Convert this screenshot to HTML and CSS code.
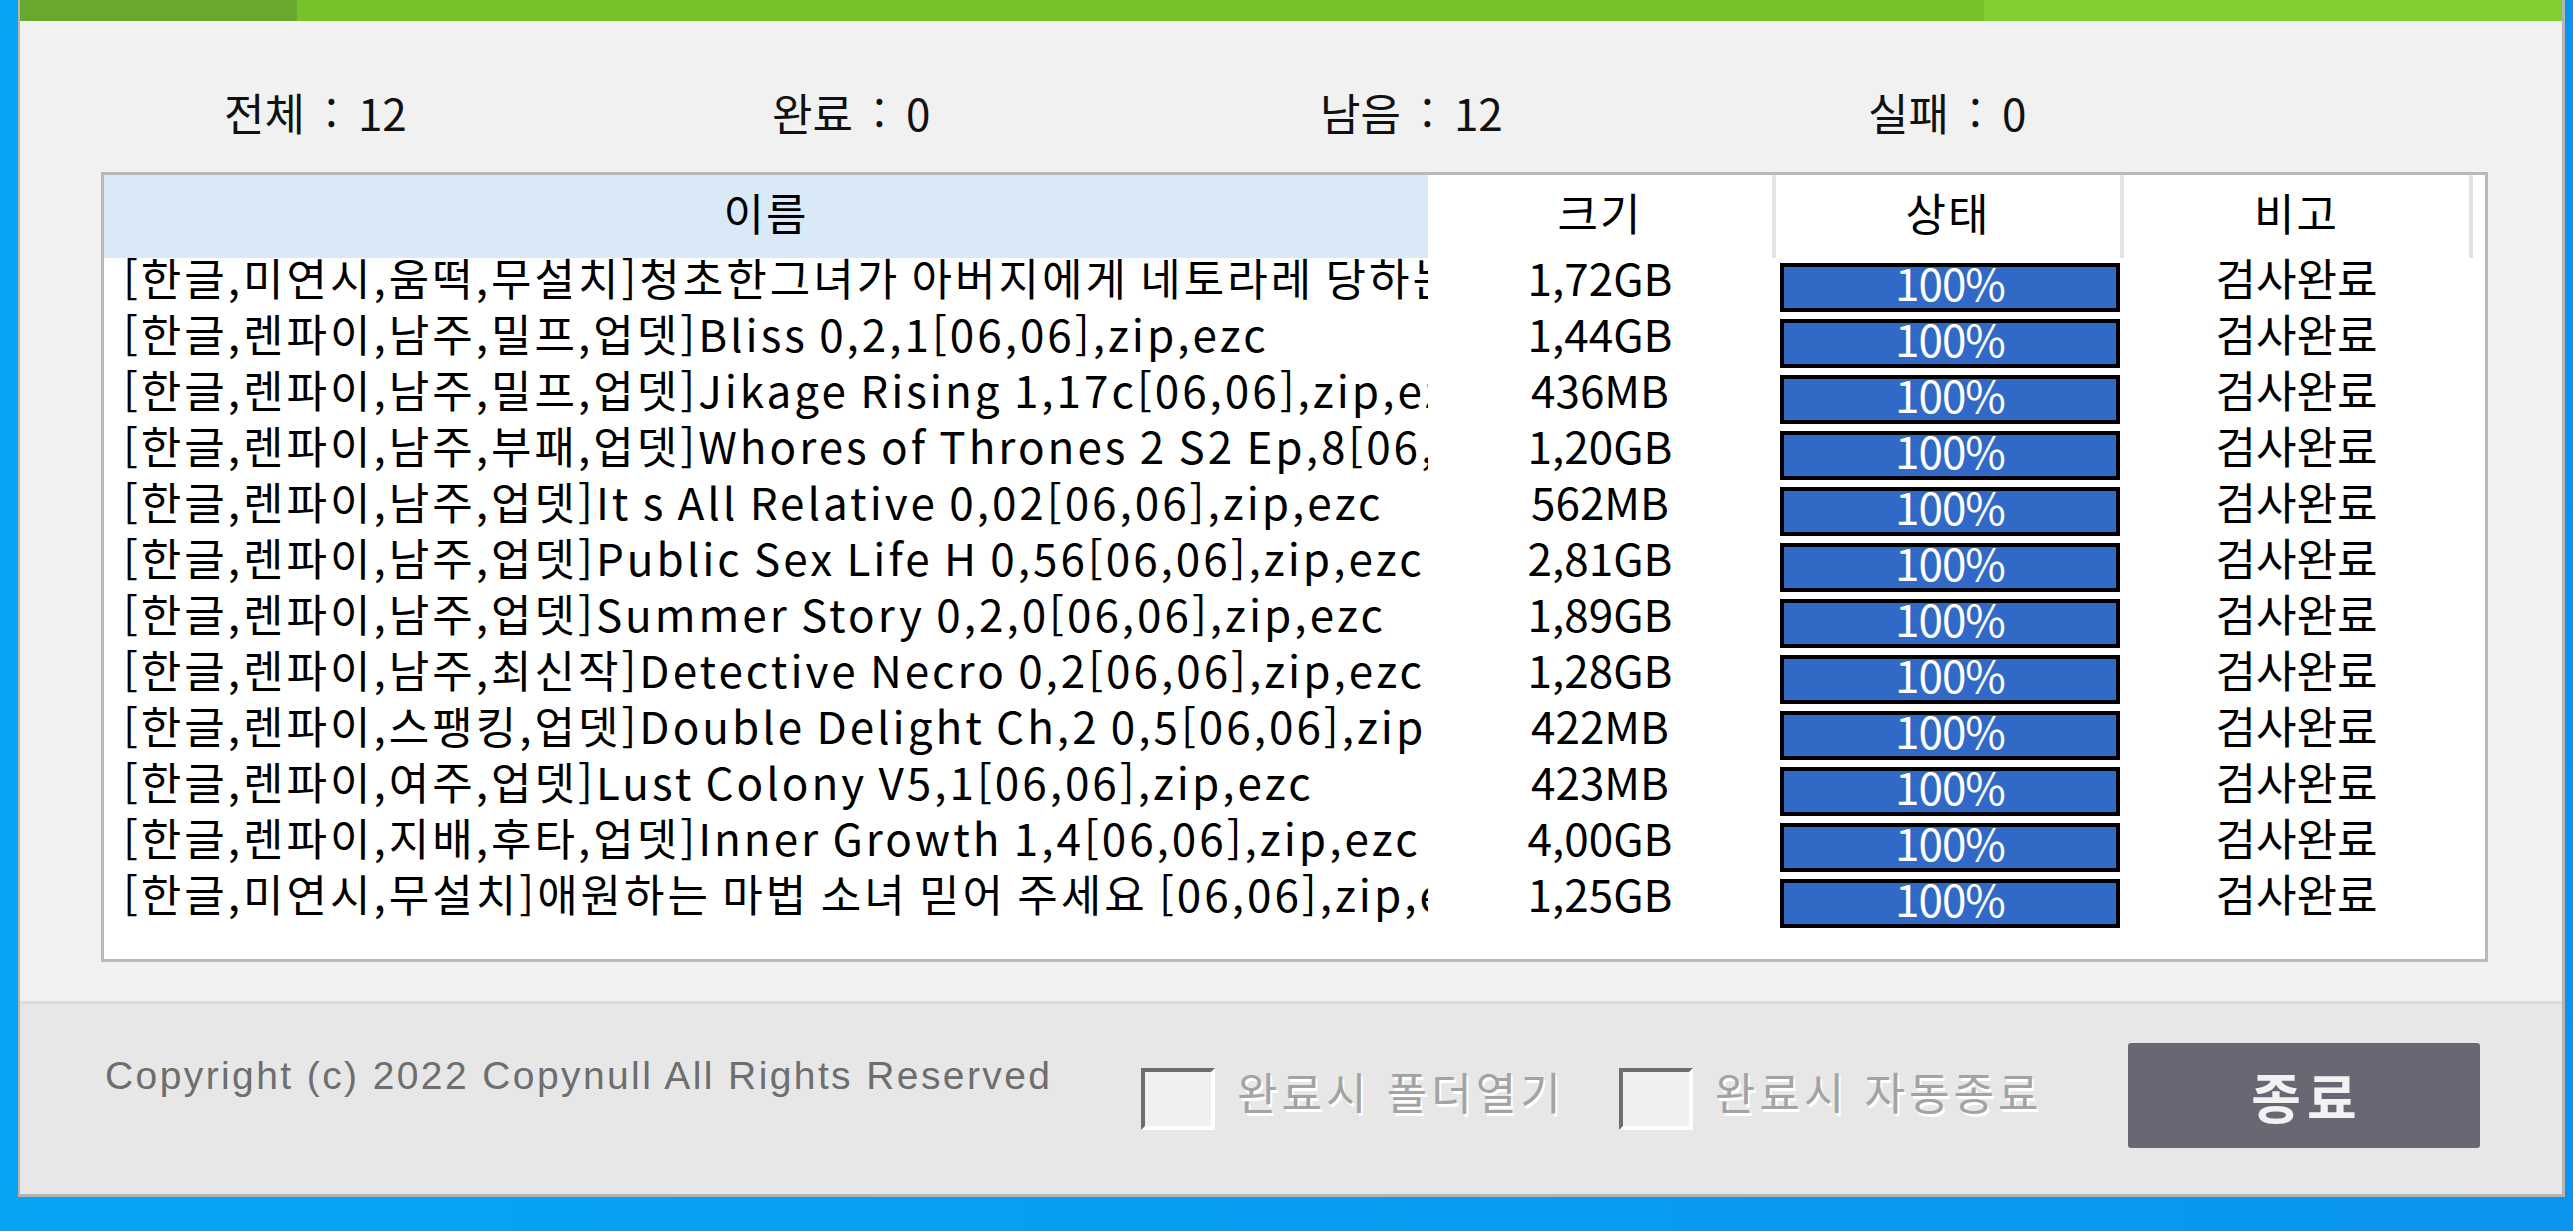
FILE: index.html
```html
<!DOCTYPE html>
<html lang="ko">

<head>
    <meta charset="UTF-8">
    <meta name="viewport" content="width=device-width, initial-scale=1.0">
    <title>검사</title>
    <link rel="stylesheet" href="styles.css">
</head>

<body>
    <div class="window">
        <div class="titlebar">
            <div class="tab-a"></div>
            <div class="tab-b"></div>
            <div class="tab-c"></div>
        </div>

        <div class="main">
            <div class="stats">
                <span>전체 : 12</span>
                <span>완료 : 0</span>
                <span>남음 : 12</span>
                <span>실패 : 0</span>
            </div>

            <div class="list">
                <div class="list-head">
                    <div class="head-name">이름</div>
                    <div class="sep">크기</div>
                    <div class="sep">상태</div>
                    <div class="sep">비고</div>
                    <div></div>
                </div>

                <div class="row">
                    <div class="name">[한글,미연시,움떡,무설치]청초한그녀가 아버지에게 네토라레 당하는 이야기[06,06],zip,ezc</div>
                    <div class="size">1,72GB</div>
                    <div class="state"><div class="bar">100%</div></div>
                    <div class="note">검사완료</div>
                </div>
                <div class="row">
                    <div class="name">[한글,렌파이,남주,밀프,업뎃]Bliss 0,2,1[06,06],zip,ezc</div>
                    <div class="size">1,44GB</div>
                    <div class="state"><div class="bar">100%</div></div>
                    <div class="note">검사완료</div>
                </div>
                <div class="row">
                    <div class="name">[한글,렌파이,남주,밀프,업뎃]Jikage Rising 1,17c[06,06],zip,ezc</div>
                    <div class="size">436MB</div>
                    <div class="state"><div class="bar">100%</div></div>
                    <div class="note">검사완료</div>
                </div>
                <div class="row">
                    <div class="name">[한글,렌파이,남주,부패,업뎃]Whores of Thrones 2 S2 Ep,8[06,06],zip,ezc</div>
                    <div class="size">1,20GB</div>
                    <div class="state"><div class="bar">100%</div></div>
                    <div class="note">검사완료</div>
                </div>
                <div class="row">
                    <div class="name">[한글,렌파이,남주,업뎃]It s All Relative 0,02[06,06],zip,ezc</div>
                    <div class="size">562MB</div>
                    <div class="state"><div class="bar">100%</div></div>
                    <div class="note">검사완료</div>
                </div>
                <div class="row">
                    <div class="name">[한글,렌파이,남주,업뎃]Public Sex Life H 0,56[06,06],zip,ezc</div>
                    <div class="size">2,81GB</div>
                    <div class="state"><div class="bar">100%</div></div>
                    <div class="note">검사완료</div>
                </div>
                <div class="row">
                    <div class="name">[한글,렌파이,남주,업뎃]Summer Story 0,2,0[06,06],zip,ezc</div>
                    <div class="size">1,89GB</div>
                    <div class="state"><div class="bar">100%</div></div>
                    <div class="note">검사완료</div>
                </div>
                <div class="row">
                    <div class="name">[한글,렌파이,남주,최신작]Detective Necro 0,2[06,06],zip,ezc</div>
                    <div class="size">1,28GB</div>
                    <div class="state"><div class="bar">100%</div></div>
                    <div class="note">검사완료</div>
                </div>
                <div class="row">
                    <div class="name">[한글,렌파이,스팽킹,업뎃]Double Delight Ch,2 0,5[06,06],zip,ezc</div>
                    <div class="size">422MB</div>
                    <div class="state"><div class="bar">100%</div></div>
                    <div class="note">검사완료</div>
                </div>
                <div class="row">
                    <div class="name">[한글,렌파이,여주,업뎃]Lust Colony V5,1[06,06],zip,ezc</div>
                    <div class="size">423MB</div>
                    <div class="state"><div class="bar">100%</div></div>
                    <div class="note">검사완료</div>
                </div>
                <div class="row">
                    <div class="name">[한글,렌파이,지배,후타,업뎃]Inner Growth 1,4[06,06],zip,ezc</div>
                    <div class="size">4,00GB</div>
                    <div class="state"><div class="bar">100%</div></div>
                    <div class="note">검사완료</div>
                </div>
                <div class="row">
                    <div class="name">[한글,미연시,무설치]애원하는 마법 소녀 믿어 주세요 [06,06],zip,ezc</div>
                    <div class="size">1,25GB</div>
                    <div class="state"><div class="bar">100%</div></div>
                    <div class="note">검사완료</div>
                </div>
            </div>
        </div>

        <div class="footer">
            <div class="copyright">Copyright (c) 2022 Copynull All Rights Reserved</div>
            <div class="check">
                <div class="box"></div>
                <span class="check-label">완료시 폴더열기</span>
            </div>
            <div class="check">
                <div class="box"></div>
                <span class="check-label">완료시 자동종료</span>
            </div>
            <button class="btn-close">종료</button>
        </div>
    </div>
</body>

</html>
```

FILE: styles.css
```css
html, body {
    margin: 0;
    padding: 0;
}

body {
    width: 2573px;
    height: 1231px;
    overflow: hidden;
    background: linear-gradient(90deg, #07a5f2 0%, #099cf0 60%, #0a94ef 100%);
    font-family: "Noto Sans CJK KR", sans-serif;
    color: #000;
}

.window {
    margin-left: 18px;
    width: 2547px;
    height: 1197px;
    box-sizing: border-box;
    border: solid #b4b4b4;
    border-width: 0 3px 3px 2px;
    background: #f1f1f1;
    display: flex;
    flex-direction: column;
}

.titlebar {
    display: flex;
    height: 21px;
}

.tab-a {
    width: 277px;
    background: #68a82f;
}

.tab-b {
    width: 1687px;
    background: #77c12b;
}

.tab-c {
    flex: 1;
    background: #82cf33;
}

.main {
    flex: 1;
    padding-top: 72px;
}

.stats {
    display: grid;
    grid-template-columns: repeat(4, 548px);
    padding-left: 204px;
    font-size: 44px;
    line-height: 38px;
    word-spacing: 8px;
    height: 38px;
    color: #111;
}

.list {
    margin: 41px 0 0 81px;
    width: 2387px;
    height: 790px;
    box-sizing: border-box;
    border: 3px solid #b9b9b9;
    background: #fff;
    overflow: hidden;
}

.list-head,
.row {
    display: grid;
    grid-template-columns: 1324px 348px 348px 349px 1fr;
    font-size: 44px;
    line-height: 38px;
}

.list-head {
    height: 83px;
}

.list-head > div {
    box-sizing: border-box;
    text-align: center;
    padding-top: 18px;
    letter-spacing: 2px;
}

.head-name {
    background: #d9e9f7;
}

.sep {
    border-right: 4px solid #e3e3e3;
}

.row {
    height: 56px;
}

.name {
    padding-left: 19px;
    letter-spacing: 3px;
    word-spacing: -4px;
    white-space: nowrap;
    overflow: hidden;
}

.size,
.note {
    text-align: center;
    padding-right: 4px;
}

.bar {
    margin: 5px 0 0 4px;
    width: 340px;
    height: 49px;
    box-sizing: border-box;
    border: 4px solid #000;
    padding-bottom: 12px;
    background: #316ac6;
    color: #fff;
    letter-spacing: -1px;
    display: flex;
    justify-content: center;
    align-items: center;
}

.footer {
    height: 193px;
    box-sizing: border-box;
    border-top: 3px solid #dcdcdc;
    background: #e7e7e7;
    display: flex;
    align-items: flex-start;
}

.copyright {
    width: 1121px;
    box-sizing: border-box;
    margin-top: 49px;
    padding-left: 85px;
    font: 39px/46px "Liberation Sans", Arial, sans-serif;
    letter-spacing: 2.4px;
    color: #6e6e6e;
    white-space: nowrap;
}

.check {
    display: flex;
    align-items: flex-start;
    margin-top: 64px;
}

.check + .check {
    margin-left: 54px;
}

.box {
    width: 74px;
    height: 62px;
    box-sizing: border-box;
    border: 4px solid;
    border-color: #6e6e6e #fff #fff #6e6e6e;
    background: #f0f0f0;
}

.check-label {
    margin: 4px 0 0 22px;
    font-size: 44px;
    line-height: 38px;
    letter-spacing: 4px;
    color: #a3a3a3;
    text-shadow: 2px 3px 0 #fff;
    white-space: nowrap;
}

.btn-close {
    margin: 39px 82px 0 auto;
    width: 352px;
    height: 105px;
    border: 0;
    border-radius: 3px;
    background: #686773;
    color: #f2f2f2;
    font: bold 54px "Noto Sans CJK KR", sans-serif;
    letter-spacing: 6px;
    padding: 0 0 0 6px;
    display: flex;
    align-items: center;
    justify-content: center;
}
```
